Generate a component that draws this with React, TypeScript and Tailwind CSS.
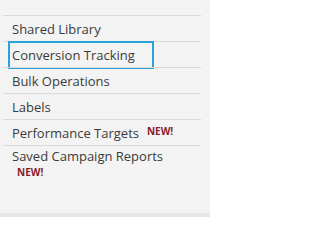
export default function App() {
  const rows = ["Shared Library", "Conversion Tracking", "Bulk Operations", "Labels"]

  return (
    <div className="flex h-[217px] w-[210px] flex-col bg-[#f3f3f3] font-['Open_Sans',sans-serif] text-[13px] text-[#3b3b3b]">
      <div className="flex-1 pl-[3px] pr-[9px] pt-[15px]">
        {rows.map((label) => (
          <div
            key={label}
            className="relative flex h-[26px] items-center border-t border-[#dadada] pl-[9px] pt-[2px]"
          >
            {label === "Conversion Tracking" && (
              <span className="absolute left-[5px] top-[-1px] h-[28px] w-[146px] border-2 border-[#2ba2da]" />
            )}
            <span className="relative">{label}</span>
          </div>
        ))}

        {/* Performance Targets with badge */}
        <div className="flex h-[26px] items-center border-t border-[#dadada] pl-[9px] pt-[2px]">
          <span>Performance Targets</span>
          <span className="mb-[6px] ml-[8px] text-[10px] font-bold leading-none text-[#8c1a2d]">NEW!</span>
        </div>

        <div className="border-t border-[#dadada] pl-[9px] pt-[1px]">
          <div className="leading-[18px]">Saved Campaign Reports</div>
          <div className="pl-[5px] text-[10px] font-bold leading-[14px] text-[#8c1a2d]">NEW!</div>
        </div>
      </div>
      <div className="h-[4px] bg-[#e7e7e7]" />
    </div>
  )
}
